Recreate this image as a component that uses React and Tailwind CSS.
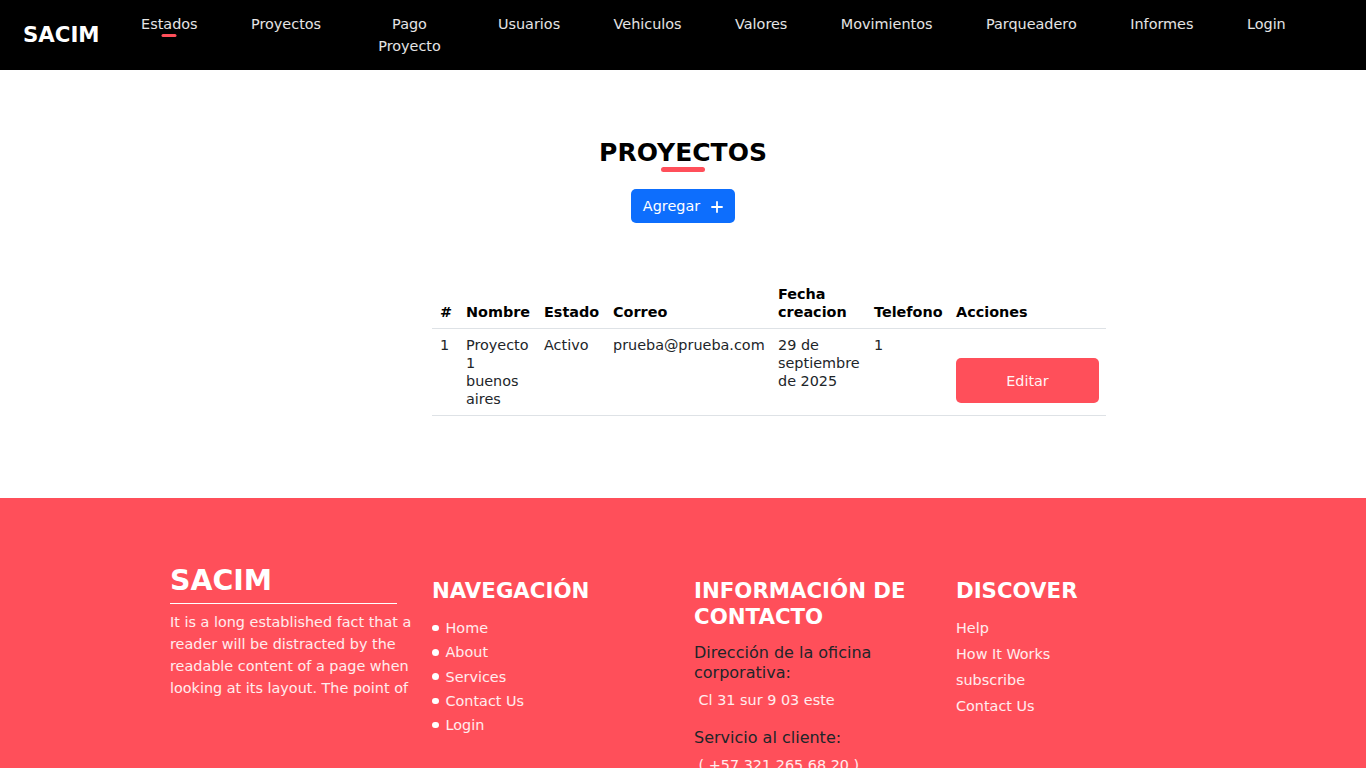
import React from 'react';

const navItems = ['Estados', 'Proyectos', 'Pago Proyecto', 'Usuarios', 'Vehiculos', 'Valores', 'Movimientos', 'Parqueadero', 'Informes', 'Login'];

const Header = () => (
  <header className="h-[70px] bg-black flex items-center pl-[23px]">
    <div className="text-[21.3px] font-bold text-white leading-none">SACIM</div>
    <nav className="ml-[41.5px] flex items-start gap-[53.45px]">
      {navItems.map((item, i) => (
        <a
          key={item}
          className={`relative block text-[14.4px] leading-[22px] text-white/90 text-center ${item === 'Pago Proyecto' ? 'w-[70px]' : ''}`}
        >
          {item}
          {i === 0 && (
            <span className="absolute left-1/2 -translate-x-1/2 top-[21px] w-[15px] h-[3px] rounded-full bg-[#ff4f5a]" />
          )}
        </a>
      ))}
    </nav>
  </header>
);

const PlusIcon = () => (
  <svg width="12" height="12" viewBox="0 0 12 12" className="ml-[11px] mt-[1px]">
    <path d="M6 0.3v11.4M0.3 6h11.4" stroke="white" strokeWidth="1.8" />
  </svg>
);

const Projects = () => (
  <main className="pt-[70px] pb-[82px]">
    <div className="flex flex-col items-center">
      <h1 className="text-[25px] font-bold leading-[26px] text-black">PROYECTOS</h1>
      <span className="mt-[1px] w-[44px] h-[5px] rounded-full bg-[#ff4f5a]" />
      <button className="mt-[17px] h-[34px] w-[104px] flex items-center justify-center rounded-[5px] bg-[#0d6efd] text-white text-[14.4px] pt-[1px]">
        Agregar
        <PlusIcon />
      </button>
    </div>

    <table className="mt-[53px] ml-[432px] w-[674px] table-fixed border-separate border-spacing-0 text-[14.4px] leading-[18px] text-[#212529]">
      <colgroup>
        <col className="w-[26px]" />
        <col className="w-[78px]" />
        <col className="w-[69px]" />
        <col className="w-[165px]" />
        <col className="w-[96px]" />
        <col className="w-[82px]" />
        <col className="w-[158px]" />
      </colgroup>
      <thead>
        <tr className="text-left text-black">
          {['#', 'Nombre', 'Estado', 'Correo', 'Fecha creacion', 'Telefono', 'Acciones'].map((h) => (
            <th key={h} className="align-bottom font-bold px-2 pt-[9px] pb-[7px] border-b border-[#dee2e6]">{h}</th>
          ))}
        </tr>
      </thead>
      <tbody>
        <tr>
          <td className="align-top px-2 pt-[7px] pb-[7px] border-b border-[#dee2e6]">1</td>
          <td className="align-top px-2 pt-[7px] pb-[7px] border-b border-[#dee2e6]">Proyecto 1 buenos aires</td>
          <td className="align-top px-2 pt-[7px] pb-[7px] border-b border-[#dee2e6]">Activo</td>
          <td className="align-top px-2 pt-[7px] pb-[7px] border-b border-[#dee2e6]">prueba@prueba.com</td>
          <td className="align-top px-2 pt-[7px] pb-[7px] border-b border-[#dee2e6]">29 de septiembre de 2025</td>
          <td className="align-top px-2 pt-[7px] pb-[7px] border-b border-[#dee2e6]">1</td>
          <td className="align-top px-2 pt-[7px] pb-[7px] border-b border-[#dee2e6]">
            <button className="mt-[22px] h-[45px] w-[143px] rounded-[5px] bg-[#ff4f5a] text-white/95 text-[14.4px]">Editar</button>
          </td>
        </tr>
      </tbody>
    </table>
  </main>
);

const Footer = () => (
  <footer className="bg-[#ff4f5a] min-h-[357px] pt-[66px] pl-[170px] text-white/90">
    <div className="grid grid-cols-[262px_262px_262px_262px] items-start">
      <div>
        <h2 className="text-[28.4px] font-bold leading-[34px] text-white">SACIM</h2>
        <div className="mt-[5px] w-[227px] border-t border-white" />
        <p className="mt-[7px] w-[250px] text-[14.4px] leading-[22px]">
          It is a long established fact that a reader will be distracted by the readable content of a page when looking at its layout. The point of
        </p>
      </div>

      <div className="pt-[14px]">
        <h3 className="text-[21.3px] font-bold leading-[26px] text-white">NAVEGACIÓN</h3>
        <ul className="mt-[12px] text-[14.4px] leading-[24.25px]">
          {['Home', 'About', 'Services', 'Contact Us', 'Login'].map((l) => (
            <li key={l} className="flex items-center">
              <span className="w-[6.5px] h-[6.5px] rounded-full bg-white mr-[7px]" />
              {l}
            </li>
          ))}
        </ul>
      </div>

      <div className="pt-[14px]">
        <h3 className="text-[21.3px] font-bold leading-[26px] text-white w-[250px]">INFORMACIÓN DE CONTACTO</h3>
        <p className="mt-[13px] text-[16px] leading-[20px] text-[#212529] w-[240px]">Dirección de la oficina corporativa:</p>
        <p className="mt-[6px] text-[14.4px] leading-[22px]">&nbsp;Cl 31 sur 9 03 este</p>
        <p className="mt-[17px] text-[16px] leading-[20px] text-[#212529]">Servicio al cliente:</p>
        <p className="mt-[6px] text-[14.4px] leading-[22px]">&nbsp;( +57 321 265 68 20 )</p>
      </div>

      <div className="pt-[14px]">
        <h3 className="text-[21.3px] font-bold leading-[26px] text-white">DISCOVER</h3>
        <ul className="mt-[11px] text-[14.4px] leading-[26px]">
          {['Help', 'How It Works', 'subscribe', 'Contact Us'].map((l) => (
            <li key={l}>{l}</li>
          ))}
        </ul>
      </div>
    </div>
  </footer>
);

export default function App() {
  return (
    <div className="font-['DejaVu_Sans',sans-serif] bg-white">
      <Header />
      <Projects />
      <Footer />
    </div>
  );
}
